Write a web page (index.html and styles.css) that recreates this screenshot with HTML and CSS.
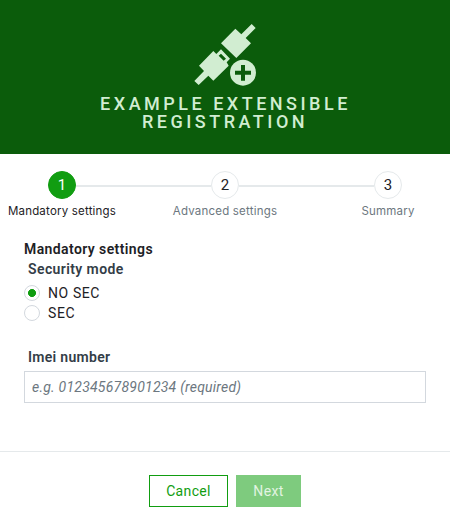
FILE: index.html
```
<!DOCTYPE html>
<html lang="en">
<head>
<meta charset="utf-8">
<title>Example extensible registration</title>
<link rel="stylesheet" href="styles.css">
</head>
<body>
<header class="header">
  <svg class="logo" viewBox="39 24 192 192" width="64" height="64" aria-hidden="true">
    <path fill="currentColor" d="M123 85 166 41 184 58 215 27 227 39 197 69 213 85 169 129Z"/>
    <path fill="currentColor" fill-rule="evenodd" d="M57 152 100 108 109 117 123 103 150 131 140 142 146 152 100 197 85 182 56 210 43 198 72 168ZM116 122 123 116 138 131 131 137Z"/>
    <circle cx="189" cy="173" r="39" fill="currentColor"/>
    <path class="plus" d="M189 150v47M165 173.500h48"/>
  </svg>
  <h1 class="title">Example extensible<br>registration</h1>
</header>
<main>
  <ol class="stepper">
    <li class="step active"><span class="number">1</span><span class="step-label">Mandatory settings</span></li>
    <li class="step"><span class="number">2</span><span class="step-label">Advanced settings</span></li>
    <li class="step"><span class="number">3</span><span class="step-label">Summary</span></li>
  </ol>
  <form>
    <div class="fields">
      <h2 class="section-title">Mandatory settings</h2>
      <div class="label security">Security mode</div>
      <label class="radio"><input type="radio" name="security" checked><span>NO SEC</span></label>
      <label class="radio"><input type="radio" name="security"><span>SEC</span></label>
      <label class="label imei-label" for="imei">Imei number</label>
      <input class="text-input" id="imei" type="text" placeholder="e.g. 012345678901234 (required)">
    </div>
    <footer class="footer">
      <button class="button cancel" type="button">Cancel</button>
      <button class="button next" type="button" disabled>Next</button>
    </footer>
  </form>
</main>
</body>
</html>
```
FILE: styles.css
```
* { box-sizing: border-box; }
body { margin: 0; background: #fff; color: #1d2125; font: 14px/20px Roboto, "Liberation Sans", sans-serif; }
.header { height: 154px; padding-top: 23px; background: #0b5c0b; color: #d1edd1; text-align: center; }
.logo { display: block; margin: 0 auto 8px; }
.plus { fill: none; stroke: #0b5c0b; stroke-width: 12; }
.title { margin: 0; font-size: 18px; line-height: 18px; font-weight: 500; letter-spacing: 3.5px; text-indent: 1px; text-transform: uppercase; }
.stepper { list-style: none; display: grid; grid-template-columns: 124px 202px 124px; height: 68px; margin: 0; padding: 17px 0 0; }
.step { position: relative; display: flex; flex-direction: column; align-items: center; color: #6c7780; }
.step:not(:last-child)::after { content: ""; position: absolute; top: 14px; left: calc(50% + 14px); width: 135px; height: 2px; background: #e5e9eb; }
.number { display: grid; place-items: center; width: 28px; height: 28px; border: 1px solid #e5e9eb; border-radius: 50%; color: #1d2125; font-size: 15px; }
.active .number { border-color: #119d11; background: #119d11; color: #fff; }
.step-label { margin-top: 4px; font: 11.5px/16px Inter, sans-serif; letter-spacing: .2px; white-space: nowrap; }
.active .step-label { color: #1d2125; }
.fields { padding: 17px 24px 0; height: 229px; }
.section-title { margin: 0; font-size: 14px; line-height: 20px; font-weight: 600; letter-spacing: .4px; }
.label { display: block; padding-left: 4px; color: #333d47; font-weight: 600; letter-spacing: .4px; }
.security { margin-bottom: 4px; }
.radio { display: flex; align-items: center; gap: 8px; height: 20px; letter-spacing: .6px; }
.radio input { appearance: none; width: 16px; height: 16px; margin: 0; border: 1px solid #d3d8de; border-radius: 50%; background: #fff; }
.radio input:checked { background: radial-gradient(circle, #119d11 3.7px, transparent 4.2px); }
.imei-label { margin: 24px 0 4px; letter-spacing: .3px; }
.text-input { display: block; width: 100%; height: 32px; padding: 0 7px; border: 1px solid #d3d8de; border-radius: 0; font: 14px/20px Roboto, sans-serif; letter-spacing: .23px; }
.text-input::placeholder { color: #6c7780; font-style: italic; opacity: 1; }
.footer { display: flex; justify-content: center; gap: 8px; height: 80px; padding-top: 23px; border-top: 1px solid #e5e9eb; }
.button { height: 32px; padding: 0; border: 1px solid #119d11; background: #fff; color: #119d11; font: 14px/20px Roboto, sans-serif; letter-spacing: .35px; }
.cancel { width: 79px; }
.next { width: 65px; border-color: #7ecb7e; background: #7ecb7e; color: #e2f4e2; }
```
